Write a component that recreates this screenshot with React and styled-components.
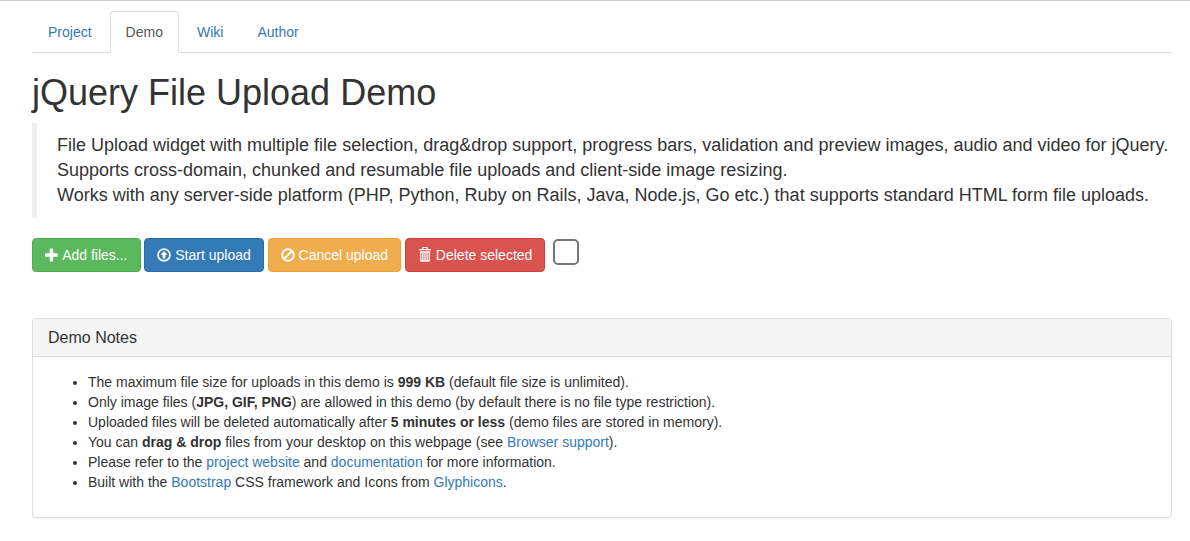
import React from 'react';
import styled, { createGlobalStyle } from 'styled-components';

const GlobalStyle = createGlobalStyle`
  * { box-sizing: border-box; }
  body {
    margin: 0;
    border-top: 1px solid #c8c8c8;
    background: #fff;
    color: #333;
    font: 14px/20px "Helvetica Neue", Helvetica, Arial, "Liberation Sans", sans-serif;
  }
`;

const Container = styled.div`
  padding: 10px 18px 20px 32px;
`;

const Tabs = styled.ul`
  display: flex;
  gap: 2px;
  margin: 0;
  padding: 0;
  list-style: none;
  border-bottom: 1px solid #ddd;
`;

const Tab = styled.li`
  margin-bottom: -1px;
`;

const Link = styled.a`
  color: #337ab7;
  text-decoration: none;
`;

const TabLink = styled(Link)`
  display: block;
  padding: 10px 15px;
  border: 1px solid ${(p) => (p.$active ? '#ddd' : 'transparent')};
  border-bottom-color: ${(p) => (p.$active ? '#fff' : 'transparent')};
  border-radius: 4px 4px 0 0;
  color: ${(p) => (p.$active ? '#555' : '#337ab7')};
`;

const Title = styled.h1`
  margin: 20px 0 10px;
  font-size: 36px;
  line-height: 40px;
  font-weight: 500;
`;

const Lead = styled.blockquote`
  margin: 0 0 20px;
  padding: 10px 0 10px 20px;
  border-left: 5px solid #eee;
  font-size: 18px;
  line-height: 25px;

  p { margin: 0; }
`;

const ButtonBar = styled.div`
  margin-bottom: 46px;
`;

const Button = styled.button`
  padding: 6px 12px;
  border: 1px solid ${(p) => p.$border};
  border-radius: 4px;
  background: ${(p) => p.$color};
  color: #fff;
  font: inherit;
  white-space: nowrap;
  vertical-align: middle;
  cursor: pointer;

  svg { vertical-align: -2px; }
`;

const SelectAll = styled.input`
  appearance: none;
  width: 26px;
  height: 26px;
  margin: 0 0 6px 4px;
  border: 2px solid #767676;
  border-radius: 5px;
  background: #fff;
  vertical-align: middle;

  &:checked { background: #337ab7; }
`;

const Panel = styled.section`
  border: 1px solid #ddd;
  border-radius: 4px;
  box-shadow: 0 1px 1px rgba(0, 0, 0, 0.05);
`;

const PanelTitle = styled.h3`
  margin: 0;
  padding: 10px 15px;
  border-bottom: 1px solid #ddd;
  border-radius: 3px 3px 0 0;
  background: #f5f5f5;
  font-size: 16px;
  line-height: 17px;
  font-weight: 500;
`;

const Notes = styled.ul`
  margin: 0;
  padding: 15px 15px 25px 55px;
`;

const Icon = ({ children }) => (
  <svg width="14" height="14" viewBox="0 0 1200 1200" fill="currentColor" aria-hidden="true" overflow="visible">
    {children}
  </svg>
);

const PlusIcon = () => (
  <Icon>
    <path d="M450 50h200q50 0 50 50v350h350q50 0 50 50v200q0 50-50 50H700v350q0 50-50 50H450q-50 0-50-50V750H50q-50 0-50-50V500q0-50 50-50h350V100q0-50 50-50z" />
  </Icon>
);

const UploadIcon = () => (
  <Icon>
    <circle cx="600" cy="600" r="510" fill="none" stroke="currentColor" strokeWidth="150" />
    <path d="M600 250l290 330q15 20-12 20H720v270q0 30-30 30H510q-30 0-30-30V600H322q-27 0-12-20z" />
  </Icon>
);

const BanIcon = () => (
  <Icon>
    <circle cx="600" cy="600" r="500" fill="none" stroke="currentColor" strokeWidth="174" />
    <path d="M255 945L945 255" stroke="currentColor" strokeWidth="174" />
  </Icon>
);

const TrashIcon = () => (
  <Icon>
    <path d="M360 80V-20q0-70 70-70h340q70 0 70 70V80h220q60 0 60 60v50H80v-50q0-60 60-60zM460 80h280V10H460z" fillRule="evenodd" />
    <path fillRule="evenodd" d="M170 270h860v810q0 90-90 90H260q-90 0-90-90zM285 380v680h75V380zM470 380v680h75V380zM655 380v680h75V380zM840 380v680h75V380z" />
  </Icon>
);

const tabs = ['Project', 'Demo', 'Wiki', 'Author'];

const actions = [
  { label: 'Add files...', color: '#5cb85c', border: '#4cae4c', Glyph: PlusIcon },
  { label: 'Start upload', color: '#337ab7', border: '#2e6da4', Glyph: UploadIcon },
  { label: 'Cancel upload', color: '#f0ad4e', border: '#eea236', Glyph: BanIcon },
  { label: 'Delete selected', color: '#d9534f', border: '#d43f3a', Glyph: TrashIcon },
];

export default function App() {
  return (
    <>
      <GlobalStyle />
      <Container>
        <nav>
          <Tabs>
            {tabs.map((name) => (
              <Tab key={name}>
                <TabLink href="#" $active={name === 'Demo'}>{name}</TabLink>
              </Tab>
            ))}
          </Tabs>
        </nav>
        <main>
          <Title>jQuery File Upload Demo</Title>
          <Lead>
            <p>
              File Upload widget with multiple file selection, drag&amp;drop support, progress bars, validation and preview images, audio and video for jQuery.
              <br />
              Supports cross-domain, chunked and resumable file uploads and client-side image resizing.
              <br />
              Works with any server-side platform (PHP, Python, Ruby on Rails, Java, Node.js, Go etc.) that supports standard HTML form file uploads.
            </p>
          </Lead>
          <ButtonBar>
            {actions.map(({ label, color, border, Glyph }) => (
              <React.Fragment key={label}>
                <Button type="button" $color={color} $border={border}>
                  <Glyph /> <span>{label}</span>
                </Button>{' '}
              </React.Fragment>
            ))}
            <SelectAll type="checkbox" aria-label="Select all files" />
          </ButtonBar>
          <Panel>
            <PanelTitle>Demo Notes</PanelTitle>
            <Notes>
              <li>The maximum file size for uploads in this demo is <strong>999 KB</strong> (default file size is unlimited).</li>
              <li>Only image files (<strong>JPG, GIF, PNG</strong>) are allowed in this demo (by default there is no file type restriction).</li>
              <li>Uploaded files will be deleted automatically after <strong>5 minutes or less</strong> (demo files are stored in memory).</li>
              <li>You can <strong>drag &amp; drop</strong> files from your desktop on this webpage (see <Link href="#">Browser support</Link>).</li>
              <li>Please refer to the <Link href="#">project website</Link> and <Link href="#">documentation</Link> for more information.</li>
              <li>Built with the <Link href="#">Bootstrap</Link> CSS framework and Icons from <Link href="#">Glyphicons</Link>.</li>
            </Notes>
          </Panel>
        </main>
      </Container>
    </>
  );
}
